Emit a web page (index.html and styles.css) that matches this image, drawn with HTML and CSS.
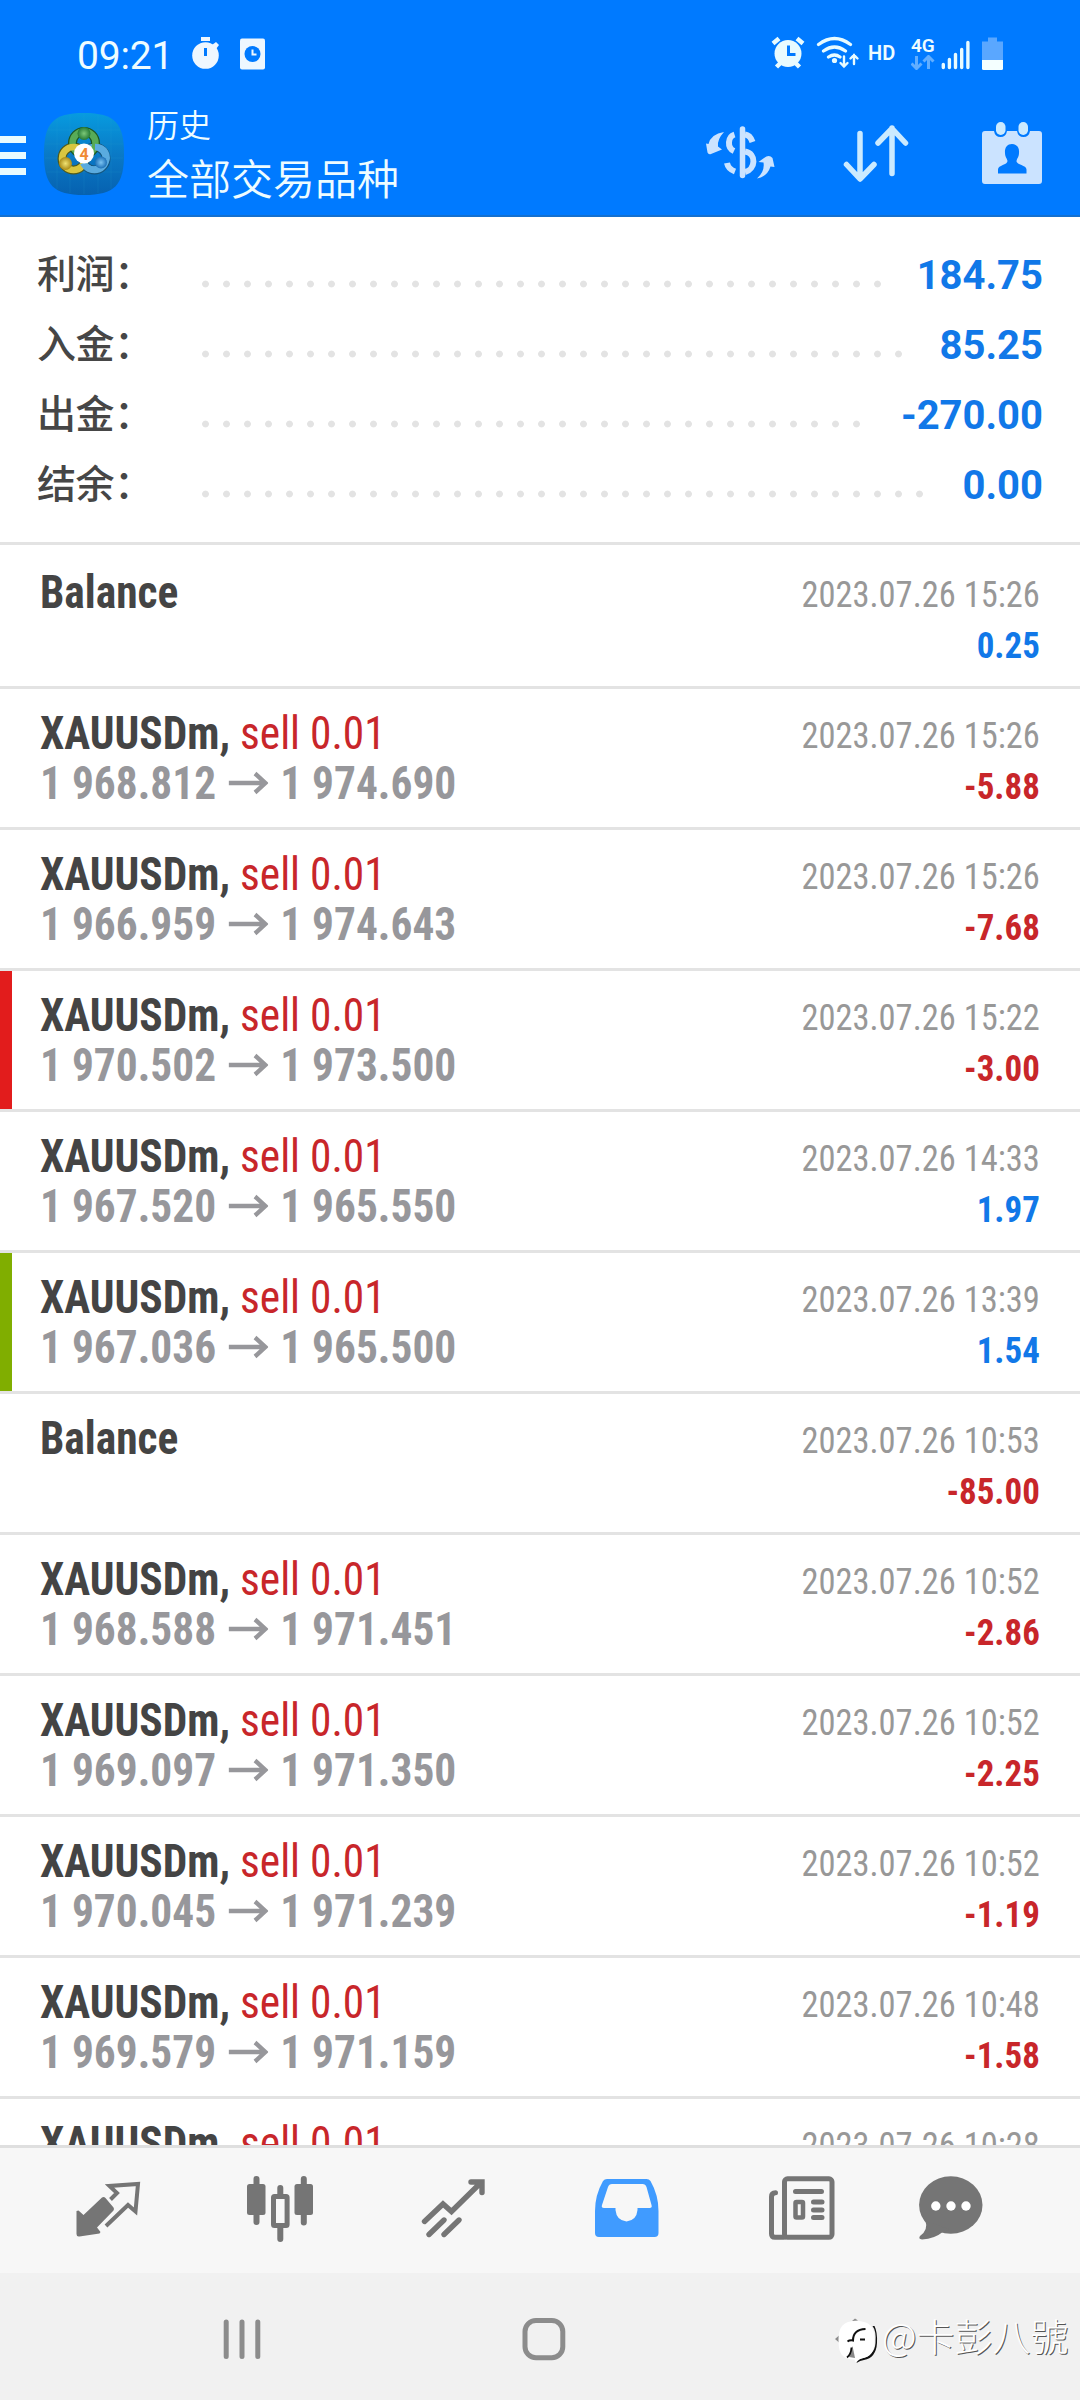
FILE: index.html
```html
<!DOCTYPE html>
<html lang="zh-CN">
<head>
<meta charset="utf-8">
<title>历史</title>
<link rel="stylesheet" href="styles.css">
</head>
<body>
<div class="screen">
  <header class="header">
    <div class="status">
      <span class="clock">09:21</span>
      <svg class="st-timer" width="28" height="34" viewBox="192 37 28 34"><g fill="#eef7ff"><circle cx="205.500" cy="56.500" r="13.300"/><rect x="201" y="38" width="9" height="4"/><path d="M212 46l4-3 3 3-3 4z"/></g><path d="M205.500 49v8" stroke="#007aff" stroke-width="3"/></svg>
      <svg class="st-card" width="26" height="32" viewBox="240 38.500 26 32"><rect x="240" y="39" width="25" height="31" rx="2" fill="#eef7ff"/><circle cx="252.500" cy="54.500" r="8" fill="#007aff"/><path d="M252.500 50v5h4" fill="none" stroke="#eef7ff" stroke-width="2"/></svg>
      <div class="status-right">
        <svg width="34" height="34" viewBox="771 37 34 34"><circle cx="788" cy="54.500" r="13.500" fill="#e8fbff"/><g stroke="#e8fbff" stroke-width="4.500"><path d="M773 44.500l6-5M803 44.500l-6-5M776.500 68l4-4M799.500 68l-4-4"/></g><path d="M788.500 46.500v9h7" fill="none" stroke="#007aff" stroke-width="3"/></svg>
        <svg class="st-wifi" width="44" height="34" viewBox="816 37 44 34"><g fill="none" stroke="#e8fbff" stroke-width="3.200" stroke-linecap="round"><path d="M818.500 45.500q16-12 32 0M823.500 52q11-8 22 0M828.500 58q6-4 11.500 0"/><path stroke-width="2.400" d="M844 57.500v10M840.500 64l3.500 3.500 3.500-3.500M854 65V56M850.500 59.500l3.500-3.500 3.500 3.500"/></g><circle cx="834.500" cy="61.500" r="2.600" fill="#e8fbff"/></svg>
        <span class="hd">HD</span>
        <span class="net"><span>4G</span><svg width="24" height="15" viewBox="911 56 24 15"><path d="M916.500 57v12M911.500 64.500l5 5 5-5M928.500 70V58M923.500 62.500l5-5 5 5" fill="none" stroke="#62aeff" stroke-width="3"/></svg></span>
        <svg class="st-signal" width="30" height="30" viewBox="941 40 30 30"><path d="M943.300 64.500v3M949.400 59.500v8M955.500 54.500v13M961.700 49.500v18M967.900 42.500v25" stroke="#e8fbff" stroke-width="3.400" stroke-linecap="round"/></svg>
        <svg class="st-battery" width="22" height="33" viewBox="982 37 22 33"><path d="M988 37.500h9v4h6V60h-21V41.500h6z" fill="#5aa7ff"/><path d="M982 60h21v8.500q0 1.500-1.500 1.500h-18q-1.500 0-1.500-1.500z" fill="#f4ffff"/></svg>
      </div>
    </div>
    <div class="appbar">
      <svg class="menu" width="26" height="40" viewBox="0 136 26 40"><path d="M0 136h26v7H0zM0 152h26v7H0zM0 168h26v7H0z" fill="#e8fbff"/></svg>
      <svg class="logo" width="80" height="82" viewBox="44 113 80 82">
        <defs>
          <linearGradient id="tile" x1="0" y1="0" x2="0" y2="1"><stop offset="0" stop-color="#079bdf"/><stop offset=".5" stop-color="#0a7ac6"/><stop offset="1" stop-color="#0661b0"/></linearGradient>
          <radialGradient id="g"><stop offset="0" stop-color="#7cc878"/><stop offset="1" stop-color="#257a35"/></radialGradient>
          <radialGradient id="y"><stop offset="0" stop-color="#f0e272"/><stop offset="1" stop-color="#a98a16"/></radialGradient>
          <radialGradient id="b"><stop offset="0" stop-color="#7cc4f2"/><stop offset="1" stop-color="#1c70b8"/></radialGradient>
        </defs>
        <path d="M84 113c31 0 40 10 40 41s-9 41-40 41-40-10-40-41 9-41 40-41z" fill="url(#tile)"/>
        <path d="M57 119v70M70 115v78M84 114v80M98 115v78M111 119v70M48 130h72M45 144h78M45 158h78M47 172h74" stroke="#2ba9dc" stroke-opacity=".14"/>
        <g fill="none" stroke-width="9">
          <circle cx="73.500" cy="158.500" r="11.500" stroke="#4f5a1c"/><circle cx="94.500" cy="158.500" r="11.500" stroke="#15557e"/><circle cx="84" cy="143" r="11.500" stroke="#1d5722"/>
          <g stroke-width="6.500"><circle cx="94.500" cy="158.500" r="11.500" stroke="#5aabdf"/><circle cx="84" cy="143" r="11.500" stroke="#57ab57"/><circle cx="73.500" cy="158.500" r="11.500" stroke="#d8c640"/></g>
          <path d="M95 147c10 0 14 9 10 16-5 8-17 9-22 0" stroke="#5aabdf" stroke-width="6.500"/>
        </g>
        <circle cx="84" cy="133.500" r="6.500" fill="url(#g)"/><circle cx="65.500" cy="163.500" r="6.500" fill="url(#y)"/><circle cx="101" cy="162.500" r="6" fill="url(#b)"/>
        <circle cx="84" cy="153.500" r="10" fill="#fff"/>
        <text x="84" y="159.500" class="logo-num">4</text>
      </svg>
      <div class="titles"><div class="sub">历史</div><div class="main">全部交易品种</div></div>
      <div class="actions">
        <svg width="70" height="60" viewBox="705 122 70 60"><g fill="#cbe3ff"><path d="M724 132q-13 2-15.500 12l-2.500-.500 1.500 9q1 2.500 3.500 1.500l11-4.500-4-3q-1-7 6-14.500z"/><path d="M757 178.500q8-7 6.500-16l-5-.500 5.500-4q5-4 8.500 0l2 9-4-.500q-3 10-13.500 12z"/></g><g fill="none" stroke="#cbe3ff"><path d="M742.500 129v46.500" stroke-width="5.500" stroke-linecap="round"/><path d="M734.500 134.500c-6.500 2-8 13-.500 16.500M727 163c1 5 4 7 8 8.500M745 134.500c4 .5 6 3 7.500 7.500M745 151.500c12 2 10.500 18 0 20.500" stroke-width="6"/></g></svg>
        <svg class="sort" width="66" height="60" viewBox="843 124 66 60"><path d="M860 133.500v45M846.500 164.500l13.500 14.500 14-14.500M892 173.500V128M878 143l14-14.500 13.500 14.500" fill="none" stroke="#cbeaff" stroke-width="5.500" stroke-linecap="round" stroke-linejoin="round"/></svg>
        <svg class="cal" width="60" height="64" viewBox="982 121 60 64"><path d="M985 131h9q1 6 6.500 6t6.500-6h10q1 6 6.500 6t6.500-6h9q3 0 3 3v47q0 3-3 3h-54q-3 0-3-3v-47q0-3 3-3z" fill="#cbe3ff"/><rect x="996" y="122" width="9.500" height="13" rx="4.700" fill="#cbeaff"/><rect x="1018.500" y="122" width="9.500" height="13" rx="4.700" fill="#cbeaff"/><path d="M1012 144c5 0 7.500 4 7 9 0 4-2 5-2.500 8 0 4 10 4 10 8.500v4h-28.500v-4c0-4.500 9.500-4.500 9.500-8.500-.500-3-2.500-4-2.500-8-.500-5 2-9 7-9z" fill="#007aff"/></svg>
      </div>
    </div>
  </header>

  <section class="summary">
    <div class="sum"><span class="lab">利润：</span><i class="dots d33"></i><b>184.75</b></div>
    <div class="sum"><span class="lab">入金：</span><i class="dots d34"></i><b>85.25</b></div>
    <div class="sum"><span class="lab">出金：</span><i class="dots d32"></i><b>-270.00</b></div>
    <div class="sum"><span class="lab">结余：</span><i class="dots d35"></i><b>0.00</b></div>
  </section>

  <main class="list">
    <div class="row first"><div class="left"><div class="name">Balance</div></div><div class="right"><div class="date">2023.07.26 15:26</div><div class="amt pos">0.25</div></div></div>
    <div class="row"><div class="left"><div class="name">XAUUSDm, <span class="sell">sell 0.01</span></div><div class="price"><span>1 968.812</span><svg class="arr" width="42" height="24" viewBox="0 0 42 24"><path d="M0 12h38M28 2.500L39 12 28 21.500"/></svg><span>1 974.690</span></div></div><div class="right"><div class="date">2023.07.26 15:26</div><div class="amt neg">-5.88</div></div></div>
    <div class="row"><div class="left"><div class="name">XAUUSDm, <span class="sell">sell 0.01</span></div><div class="price"><span>1 966.959</span><svg class="arr" width="42" height="24" viewBox="0 0 42 24"><path d="M0 12h38M28 2.500L39 12 28 21.500"/></svg><span>1 974.643</span></div></div><div class="right"><div class="date">2023.07.26 15:26</div><div class="amt neg">-7.68</div></div></div>
    <div class="row mark-red"><div class="left"><div class="name">XAUUSDm, <span class="sell">sell 0.01</span></div><div class="price"><span>1 970.502</span><svg class="arr" width="42" height="24" viewBox="0 0 42 24"><path d="M0 12h38M28 2.500L39 12 28 21.500"/></svg><span>1 973.500</span></div></div><div class="right"><div class="date">2023.07.26 15:22</div><div class="amt neg">-3.00</div></div></div>
    <div class="row"><div class="left"><div class="name">XAUUSDm, <span class="sell">sell 0.01</span></div><div class="price"><span>1 967.520</span><svg class="arr" width="42" height="24" viewBox="0 0 42 24"><path d="M0 12h38M28 2.500L39 12 28 21.500"/></svg><span>1 965.550</span></div></div><div class="right"><div class="date">2023.07.26 14:33</div><div class="amt pos">1.97</div></div></div>
    <div class="row mark-green"><div class="left"><div class="name">XAUUSDm, <span class="sell">sell 0.01</span></div><div class="price"><span>1 967.036</span><svg class="arr" width="42" height="24" viewBox="0 0 42 24"><path d="M0 12h38M28 2.500L39 12 28 21.500"/></svg><span>1 965.500</span></div></div><div class="right"><div class="date">2023.07.26 13:39</div><div class="amt pos">1.54</div></div></div>
    <div class="row"><div class="left"><div class="name">Balance</div></div><div class="right"><div class="date">2023.07.26 10:53</div><div class="amt neg">-85.00</div></div></div>
    <div class="row"><div class="left"><div class="name">XAUUSDm, <span class="sell">sell 0.01</span></div><div class="price"><span>1 968.588</span><svg class="arr" width="42" height="24" viewBox="0 0 42 24"><path d="M0 12h38M28 2.500L39 12 28 21.500"/></svg><span>1 971.451</span></div></div><div class="right"><div class="date">2023.07.26 10:52</div><div class="amt neg">-2.86</div></div></div>
    <div class="row"><div class="left"><div class="name">XAUUSDm, <span class="sell">sell 0.01</span></div><div class="price"><span>1 969.097</span><svg class="arr" width="42" height="24" viewBox="0 0 42 24"><path d="M0 12h38M28 2.500L39 12 28 21.500"/></svg><span>1 971.350</span></div></div><div class="right"><div class="date">2023.07.26 10:52</div><div class="amt neg">-2.25</div></div></div>
    <div class="row"><div class="left"><div class="name">XAUUSDm, <span class="sell">sell 0.01</span></div><div class="price"><span>1 970.045</span><svg class="arr" width="42" height="24" viewBox="0 0 42 24"><path d="M0 12h38M28 2.500L39 12 28 21.500"/></svg><span>1 971.239</span></div></div><div class="right"><div class="date">2023.07.26 10:52</div><div class="amt neg">-1.19</div></div></div>
    <div class="row"><div class="left"><div class="name">XAUUSDm, <span class="sell">sell 0.01</span></div><div class="price"><span>1 969.579</span><svg class="arr" width="42" height="24" viewBox="0 0 42 24"><path d="M0 12h38M28 2.500L39 12 28 21.500"/></svg><span>1 971.159</span></div></div><div class="right"><div class="date">2023.07.26 10:48</div><div class="amt neg">-1.58</div></div></div>
    <div class="row"><div class="left"><div class="name">XAUUSDm, <span class="sell">sell 0.01</span></div></div><div class="right"><div class="date">2023.07.26 10:28</div></div></div>
  </main>

  <nav class="tabs">
    <svg width="66" height="70" viewBox="75 2174 66 70"><path d="M102 2197.500q2-1 3.500.500l8 9.500q1 1.500 0 3l-16.500 17 3.500 4.500-1 1.500-20 3q-3 .500-3-2.500v-23l2-.500 5 4.500z" fill="#757575"/><path d="M110.500 2199.500l6.500-6.500-7.500-7 28.500-2-2.500 27.500-7.500-6.500-22 21" fill="none" stroke="#757575" stroke-width="4"/></svg>
    <svg width="68" height="70" viewBox="246 2174 68 70"><path d="M256.500 2179v43M303.800 2179v43.500M280.300 2188v8M280.300 2228v11" stroke="#757575" stroke-width="6" stroke-linecap="round"/><g fill="#757575"><rect x="247" y="2184" width="18.500" height="31" rx="2.500"/><rect x="294.500" y="2184" width="18.500" height="31" rx="2.500"/></g><rect x="273.500" y="2196.500" width="13.600" height="29" rx="1" fill="none" stroke="#757575" stroke-width="5"/></svg>
    <svg width="66" height="70" viewBox="420 2174 66 70"><path d="M424.500 2221.500l18.500-17.500 8.500 7.500 29-28.500M471 2182h11v10.500M429 2234.500l15-14.500M444 2234.500l15-14.500" fill="none" stroke="#757575" stroke-width="5.400" stroke-linecap="round"/></svg>
    <svg width="64" height="70" viewBox="595.500 2174 64 70"><path fill-rule="evenodd" d="M611 2179h36q2.500 0 4 2 8 14 8 30v22q0 4-4 4h-55.500q-4 0-4-4v-22q0-16 8-30 1.500-2 4-2zM612.500 2184q-3 0-4 3l-6 18q-1 3 2 3h11.500v2q1 10.500 11 11.500 10-1 11-11.500v-2H650q3 0 2-3l-5-18q-1-3-4-3z" fill="#409bff"/></svg>
    <svg width="68" height="70" viewBox="768 2174 68 70"><g fill="none" stroke="#757575" stroke-width="5" stroke-linecap="round"><rect x="784.500" y="2178.800" width="47.500" height="58.500" rx="3"/><path d="M784 2237.300h-9q-3.500 0-3.500-3.500v-37q0-4 4-4"/><path d="M795.500 2191.500h26M813.500 2202h8.500M813.500 2210h8.500M813.500 2217.500h8.500"/><rect x="795.500" y="2202" width="7.500" height="15.500" rx="1" stroke-width="4.500"/></g></svg>
    <svg width="66" height="70" viewBox="918 2174 66 70"><ellipse cx="950.800" cy="2205" rx="31.700" ry="28.800" fill="#757575"/><path d="M925.500 2221q3 9-5.500 15-2 3 2 3.500 13-1 20-7l8-3z" fill="#757575"/><g fill="#fff"><circle cx="935.800" cy="2206" r="4.700"/><circle cx="951" cy="2206" r="4.700"/><circle cx="966" cy="2206" r="4.700"/></g></svg>
  </nav>

  <footer class="sys">
    <svg class="recent" width="40" height="42" viewBox="222 2318 40 42"><path d="M226.200 2322v34.500M242 2322v34.500M257.800 2322v34.500" stroke="#8c8c8c" stroke-width="5" stroke-linecap="round"/></svg>
    <svg class="home" width="44" height="44" viewBox="522 2317 44 44"><rect x="525" y="2320.500" width="37.800" height="37.200" rx="11" fill="none" stroke="#8c8c8c" stroke-width="5"/></svg>
    <div class="mark">
      <svg width="46" height="50" viewBox="834 2316 46 50"><path d="M839 2335.500l-4 3.500 4 3.500zM852 2321l3-2.500 3 2z" fill="#8c8c8c"/><path d="M856.500 2363q1-3 5-4.500 13-3 14-15.500 1-12-3-17l2 0q3 6 2.500 17-1 15-13 17-4 .5-7.500 3z" fill="#111"/><path d="M856 2321c14 0 18.500 6 18.500 18.500 0 13-4 17.500-13 19-3 1-5 2-6 4l-1-3c-13 0-16-7-16-20 0-13 5-18.500 17.500-18.500z" fill="#fff"/><path d="M849 2357l3.500-11 2.500 12z" fill="#888"/><path d="M847.500 2341.500q2-1.500 5.500-1 0-11 12.500-11.500M860 2339.500h5" fill="none" stroke="#111" stroke-width="2"/><path d="M847 2357.500q4-3 4.500-10" fill="none" stroke="#111" stroke-width="1.800"/></svg>
      <span>@卡彭八號</span>
    </div>
  </footer>
</div>
</body>
</html>
```
FILE: styles.css
```css
* { box-sizing: border-box; }
body { margin: 0; background: #fff; font-family: Roboto, "Noto Sans CJK SC", sans-serif; }
svg { display: block; flex: none; }
.screen { width: 1080px; height: 2400px; display: flex; flex-direction: column; overflow: hidden; }

.header { height: 217px; flex: none; background: #007aff; border-bottom: 2px solid #1470cf; color: #eefcff; }
.status { height: 70px; display: flex; align-items: flex-end; padding-left: 77px; }
.clock { font-size: 39px; line-height: 28px; width: 115px; height: 28px; letter-spacing: -.2px; }
.st-card { margin-left: 20px; }
.status-right { display: flex; align-items: flex-end; margin-left: auto; padding-right: 76px; }
.st-wifi { margin-left: 11px; }
.hd { font-size: 20px; font-weight: 600; line-height: 34px; width: 27px; margin-left: 8px; }
.net { display: flex; flex-direction: column; width: 24px; margin-left: 16px; font-size: 19px; font-weight: 600; line-height: 19px; }
.st-signal { margin-left: 6px; }
.st-battery { margin-left: 11px; }

.appbar { height: 145px; display: flex; align-items: flex-start; }
.menu { margin-top: 66px; }
.logo { margin: 43px 0 0 18px; }
.logo-num { font: 700 16px Roboto, sans-serif; fill: #f08a35; text-anchor: middle; }
.titles { margin-left: 23px; padding-top: 36px; font-weight: 350; }
.sub { font-size: 32px; line-height: 40px; }
.main { font-size: 42px; line-height: 50px; margin-top: 10px; }
.actions { display: flex; margin-left: auto; padding-right: 38px; }
.actions svg { margin-top: 52px; }
.actions .sort { margin: 54px 0 0 68px; }
.actions .cal { margin: 51px 0 0 73px; }

.summary { height: 328px; flex: none; padding: 23px 37px 0 37px; border-bottom: 3px solid #e3e3e3; }
.sum { height: 70px; display: flex; align-items: center; }
.lab { width: 158px; font-size: 39px; font-weight: 500; letter-spacing: -.4px; line-height: 70px; color: #464646; }
.dots { height: 8px; margin-top: 17px; background: radial-gradient(circle at 10.5px 4px, #e3e3e3 3px, transparent 3.8px) 0 0 / 21px 8px repeat-x; }
.d32 { width: 672px; }
.d33 { width: 693px; }
.d34 { width: 714px; }
.d35 { width: 735px; }
.sum b { margin-left: auto; font-size: 40px; font-weight: 700; color: #1178e8; }

.list { flex: none; height: 1600px; overflow: hidden; font-family: "Roboto Condensed", Roboto, sans-serif; }
.row { position: relative; height: 141px; display: flex; justify-content: space-between; padding: 19px 40px 0 40px; border-bottom: 3px solid #e3e3e3; }
.first { height: 144px; padding-top: 22px; }
.mark-red::before, .mark-green::before { content: ""; position: absolute; left: 0; top: 0; width: 12px; height: 138px; background: #e21c1c; }
.mark-green::before { background: #80ae00; }
.left { transform: scaleX(.943); transform-origin: left top; }
.name { font-size: 46px; line-height: 50px; font-weight: 700; color: #444; white-space: pre; }
.sell { font-weight: 400; color: #c8262a; }
.price { display: flex; align-items: center; font-size: 46px; line-height: 50px; font-weight: 700; color: #97979b; }
.arr { margin: 0 13px; fill: none; stroke: #97979b; stroke-width: 4.5; }
.right { padding-top: 3px; text-align: right; line-height: 50px; }
.date, .amt { transform: scaleX(.932); transform-origin: right top; }
.date { font-size: 37px; color: #989898; }
.amt { font-size: 37.5px; font-weight: 700; }
.pos { color: #1178e8; }
.neg { color: #c8262a; }

.tabs { height: 128px; flex: none; display: flex; align-items: flex-start; background: #f7f7f7; border-top: 3px solid #dfdfdf; padding: 26px 0 0 75px; }
.tabs svg:nth-child(2) { margin-left: 105px; }
.tabs svg:nth-child(3) { margin-left: 106px; }
.tabs svg:nth-child(4) { margin-left: 109px; }
.tabs svg:nth-child(5) { margin-left: 109px; }
.tabs svg:nth-child(6) { margin-left: 82px; }

.sys { flex: 1; display: flex; align-items: flex-start; background: #f1f1f1; }
.recent { margin: 45px 0 0 222px; }
.home { margin: 44px 0 0 260px; }
.mark { display: flex; align-items: center; margin: 43px 0 0 268px; }
.mark span { margin: -13px 0 0 2px; font: 300 38px/50px "Noto Sans CJK TC", sans-serif; color: #fff; text-shadow: 1px 1px 0 #555; white-space: nowrap; }
```
